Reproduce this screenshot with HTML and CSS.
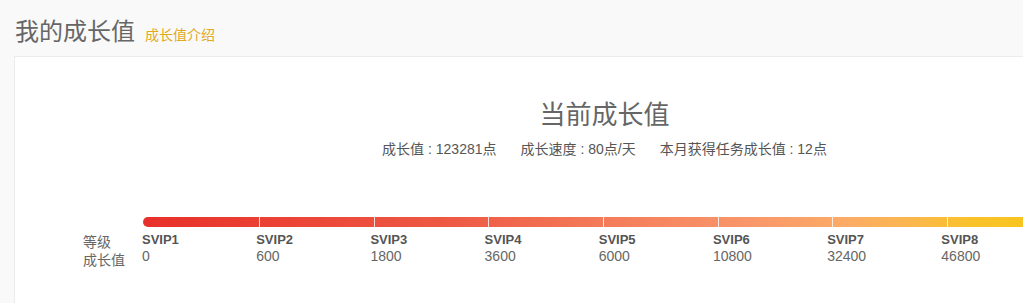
FILE: index.html
```html
<!DOCTYPE html>
<html lang="zh-CN">
  <head>
    <meta charset="UTF-8" />
    <meta name="viewport" content="width=device-width, initial-scale=1.0" />
    <title>我的成长值</title>
    <link rel="stylesheet" href="styles.css">
  </head>
  <body>
    <div class="page">
      <div class="head">
        <span class="heading">我的成长值</span>
        <a class="intro" href="#">成长值介绍</a>
      </div>

      <div class="card">
        <div class="current">当前成长值</div>
        <div class="stats">
          <span>成长值 : 123281点</span>
          <span>成长速度 : 80点/天</span>
          <span>本月获得任务成长值 : 12点</span>
        </div>

        <div class="levelBox">
          <div class="legend">
            <div>等级</div>
            <div>成长值</div>
          </div>
          <div class="track">
            <div class="bar">
              <span></span><span></span><span></span>
              <span></span><span></span><span></span>
              <span></span><span></span><span></span>
            </div>
            <div class="levels">
              <div class="lv"><b>SVIP1</b><i>0</i></div>
              <div class="lv"><b>SVIP2</b><i>600</i></div>
              <div class="lv"><b>SVIP3</b><i>1800</i></div>
              <div class="lv"><b>SVIP4</b><i>3600</i></div>
              <div class="lv"><b>SVIP5</b><i>6000</i></div>
              <div class="lv"><b>SVIP6</b><i>10800</i></div>
              <div class="lv"><b>SVIP7</b><i>32400</i></div>
              <div class="lv"><b>SVIP8</b><i>46800</i></div>
            </div>
          </div>
        </div>
      </div>
    </div>
  </body>
</html>
```

FILE: styles.css
```css
body {
  margin: 0;
  background-color: #f9f9f9;
  overflow: hidden;
  font-family: "Liberation Sans", "Noto Sans CJK SC", sans-serif;
  color: #666;
}
.page {
  width: 1180px;
  padding-left: 14px;
}
.head {
  display: flex;
  align-items: baseline;
  height: 56px;
  padding-top: 20px;
  padding-left: 1px;
  box-sizing: border-box;
}
.heading {
  font-size: 24px;
  line-height: 24px;
  color: #666;
}
.intro {
  margin-left: 10px;
  font-size: 14px;
  color: #e2a91c;
  text-decoration: none;
}
.card {
  height: 260px;
  background-color: #fff;
  border-top: 1px solid #ececec;
  border-left: 1px solid #ececec;
  padding-top: 43px;
  box-sizing: border-box;
}
.current {
  text-align: center;
  font-size: 26px;
  line-height: 30px;
  color: #666;
}
.stats {
  display: flex;
  justify-content: center;
  gap: 24px;
  margin-top: 9px;
  font-size: 14px;
  line-height: 20px;
  color: #555;
}
.levelBox {
  display: flex;
  margin-top: 58px;
  padding-left: 68px;
}
.legend {
  width: 60px;
  padding-top: 16px;
  font-size: 14px;
  line-height: 18px;
  color: #666;
}
.bar {
  display: flex;
  height: 10px;
  border-radius: 5px 0 0 5px;
  background: linear-gradient(to right, #e8302a 0%, #ee5a44 30%, #f47c5a 45%, #f9956a 58%, #fcab66 68%, #fbb84a 75%, #f9c22a 80%, #f8c61c 88%, #f8c61c 100%);
}
.bar span {
  flex: 0 0 114.67px;
  border-left: 1px solid rgba(255, 255, 255, 0.8);
  box-sizing: border-box;
}
.bar span:first-child {
  flex-basis: 116px;
  border-left: 0;
}
.levels {
  display: flex;
  margin-left: -1px;
}
.lv {
  flex: 0 0 114.2px;
  padding-top: 4px;
}
.lv b {
  display: block;
  font-size: 13px;
  line-height: 17px;
  color: #555;
}
.lv i {
  display: block;
  font-style: normal;
  font-size: 14px;
  line-height: 17px;
  color: #666;
}
```
